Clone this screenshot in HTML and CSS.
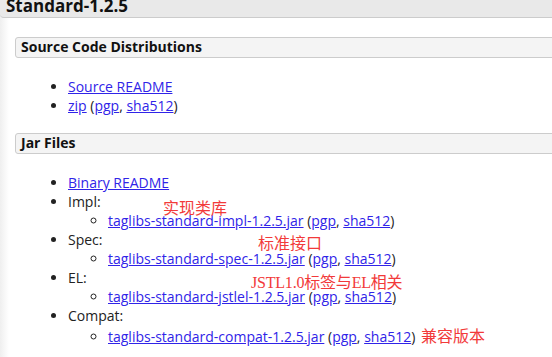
FILE: index.html
```html
<!DOCTYPE html>
<html lang="en">
<head>
    <meta charset="UTF-8">
    <title>Standard-1.2.5</title>
    <link rel="stylesheet" href="styles.css">
</head>
<body>

<div class="page">
    <h2 class="release">Standard-1.2.5</h2>

    <div class="section">
        <h3>Source Code Distributions</h3>
        <ul>
            <li><a href="#">Source README</a></li>
            <li><a href="#">zip</a> (<a href="#">pgp</a>, <a href="#">sha512</a>)</li>
        </ul>
    </div>

    <div class="section">
        <h3>Jar Files</h3>
        <ul>
            <li><a href="#">Binary README</a></li>
            <li>Impl:
                <ul>
                    <li><a href="#">taglibs-standard-impl-1.2.5.jar</a> (<a href="#">pgp</a>, <a href="#">sha512</a>)</li>
                </ul>
            </li>
            <li>Spec:
                <ul>
                    <li><a href="#">taglibs-standard-spec-1.2.5.jar</a> (<a href="#">pgp</a>, <a href="#">sha512</a>)</li>
                </ul>
            </li>
            <li>EL:
                <ul>
                    <li><a href="#">taglibs-standard-jstlel-1.2.5.jar</a> (<a href="#">pgp</a>, <a href="#">sha512</a>)</li>
                </ul>
            </li>
            <li>Compat:
                <ul>
                    <li><a href="#">taglibs-standard-compat-1.2.5.jar</a> (<a href="#">pgp</a>, <a href="#">sha512</a>) <span class="note inline">兼容版本</span></li>
                </ul>
            </li>
        </ul>
    </div>

    <!-- 手写批注 -->
    <span class="note note-impl">实现类库</span>
    <span class="note note-spec">标准接口</span>
    <span class="note note-el">JSTL1.0标签与EL相关</span>
</div>

</body>
</html>
```

FILE: styles.css
```css
body {
    margin: 0;
    font-family: 'Open Sans', 'Liberation Sans', sans-serif;
    font-size: 14px;
    color: #222222;
    background: linear-gradient(to right, #efefef 0, #ffffff 9px) no-repeat;
    background-color: #ffffff;
    overflow: hidden;
}
.page {
    position: relative;
    min-height: 357px;
}
.release {
    margin: 0 -10px 0 0;
    height: 17px;
    padding-left: 6px;
    background-color: #e9e9e9;
    border-bottom: 1px solid #cccccc;
    border-bottom-left-radius: 4px;
    font-size: 17px;
    line-height: 12px;
    font-weight: bold;
    color: #111111;
    overflow: hidden;
}
.section {
    padding-left: 15px;
}
.section h3 {
    margin: 18px -10px 0 0;
    padding: 0 0 1px 5px;
    height: 18px;
    background-color: #f4f4f4;
    border: 1px solid #cccccc;
    border-radius: 3px;
    font-size: 14px;
    line-height: 18px;
    font-weight: bold;
    color: #111111;
}
.section:first-child h3,
.release + .section h3 {
    margin-top: 19px;
}
.section ul {
    margin: 19px 0 18px;
    padding-left: 53px;
    line-height: 19px;
}
.section ul ul {
    margin: 0;
    padding-left: 40px;
    list-style-type: circle;
}
.section a {
    color: #3024e8;
}
.note {
    position: absolute;
    font-family: 'Noto Sans CJK SC', sans-serif;
    font-size: 16px;
    line-height: 20px;
    color: #f23a3a;
}
.note.inline {
    position: static;
    margin-left: 2px;
}
.note-impl {
    left: 163px;
    top: 197px;
}
.note-spec {
    left: 258px;
    top: 232px;
}
.note-el {
    left: 251px;
    top: 273px;
    font-family: 'Liberation Serif', 'Noto Sans CJK SC', serif;
    letter-spacing: -0.2px;
}
```
